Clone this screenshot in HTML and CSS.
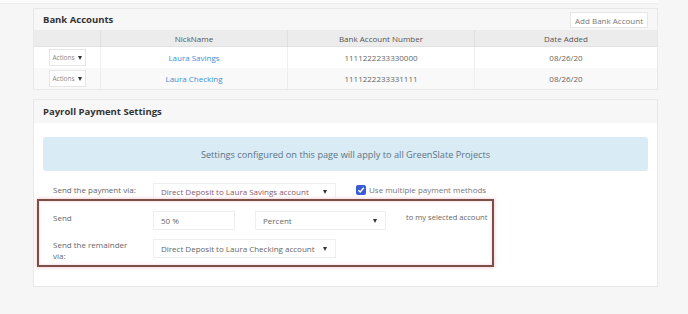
FILE: index.html
```html
<!DOCTYPE html>
<html lang="en">
<head>
    <meta charset="UTF-8">
    <meta name="viewport" content="width=device-width, initial-scale=1.0">
    <title>Payroll Payment Settings</title>
    <link rel="stylesheet" href="styles.css">
</head>
<body>
    <div class="top-strip"></div>
    <div class="page">
        <div class="panel">
            <div class="panel-head">
                <span class="panel-title">Bank Accounts</span>
                <button class="add-btn">Add Bank Account</button>
            </div>
            <table class="accounts">
                <thead>
                    <tr>
                        <th class="col-actions"></th>
                        <th class="col-mid">NickName</th>
                        <th class="col-mid">Bank Account Number</th>
                        <th>Date Added</th>
                    </tr>
                </thead>
                <tbody>
                    <tr>
                        <td><span class="actions">Actions <span class="caret"></span></span></td>
                        <td><a href="#" class="nick">Laura Savings</a></td>
                        <td>1111222233330000</td>
                        <td>08/26/20</td>
                    </tr>
                    <tr class="alt">
                        <td><span class="actions">Actions <span class="caret"></span></span></td>
                        <td><a href="#" class="nick">Laura Checking</a></td>
                        <td>1111222233331111</td>
                        <td>08/26/20</td>
                    </tr>
                </tbody>
            </table>
        </div>

        <div class="panel payroll">
            <div class="panel-head">
                <span class="panel-title">Payroll Payment Settings</span>
            </div>
            <div class="panel-body">
                <div class="alert">Settings configured on this page will apply to all GreenSlate Projects</div>

                <div class="form-row first">
                    <label class="form-label">Send the payment via:</label>
                    <div class="select wide pink">Direct Deposit to Laura Savings account <span class="caret"></span></div>
                    <label class="check">
                        <span class="box">
                            <svg width="8" height="8" viewBox="0 0 8 8"><path d="M1.3 4.2 L3.2 6 L6.8 1.8" fill="none" stroke="#fff" stroke-width="1.4"/></svg>
                        </span>
                        Use multiple payment methods
                    </label>
                </div>

                <div class="highlight">
                    <div class="form-row">
                        <label class="form-label">Send</label>
                        <div class="input">50 %</div>
                        <div class="select medium">Percent <span class="caret"></span></div>
                        <span class="after">to my selected account</span>
                    </div>
                    <div class="form-row second">
                        <label class="form-label wrap">Send the remainder via:</label>
                        <div class="select wide">Direct Deposit to Laura Checking account <span class="caret"></span></div>
                    </div>
                </div>
            </div>
        </div>
    </div>
</body>
</html>
```

FILE: styles.css
```css
body {
    margin: 0;
    background-color: #f6f6f6;
    font-family: "Open Sans", "Noto Sans", sans-serif;
    color: #666;
    font-size: 8px;
}

.top-strip {
    height: 3px;
    background-color: #fbfbfb;
    border-bottom: 1px solid #ececec;
    margin-right: 30px;
}

.page {
    padding: 4px 30px 0 33px;
}

.panel {
    background-color: #fff;
    border: 1px solid #e8e8e8;
}

.panel-head {
    height: 21px;
    background-color: #f7f7f7;
    display: flex;
    align-items: center;
    justify-content: space-between;
    padding: 0 9px;
}

.panel-title {
    font-weight: 700;
    font-size: 9.5px;
    color: #333;
}

.add-btn {
    font-family: inherit;
    font-size: 8px;
    color: #777;
    background-color: #fff;
    border: 1px solid #e6e6e6;
    height: 16px;
    padding: 0 4px;
    margin-top: 1px;
}

.accounts {
    width: 100%;
    border-collapse: collapse;
    table-layout: fixed;
}

.accounts th {
    height: 16px;
    background-color: #ececec;
    font-weight: 400;
    color: #555;
    border-right: 1px solid #e0e0e0;
    border-bottom: 1px solid #e2e2e2;
    padding: 0;
}

.accounts th:last-child,
.accounts td:last-child {
    border-right: none;
}

.accounts td {
    height: 21px;
    text-align: center;
    color: #666;
    border-right: 1px solid #eee;
    padding: 0;
}

.accounts .col-actions {
    width: 66px;
}

.accounts .col-mid {
    width: 186px;
}

.accounts tr.alt td {
    background-color: #f9f9f9;
}

.actions {
    display: inline-flex;
    align-items: center;
    justify-content: center;
    gap: 3px;
    width: 35px;
    height: 15px;
    border: 1px solid #e6e6e6;
    background-color: #fff;
    font-size: 6.5px;
    color: #888;
    vertical-align: middle;
}

.caret {
    display: inline-block;
    width: 0;
    height: 0;
    border-left: 2.5px solid transparent;
    border-right: 2.5px solid transparent;
    border-top: 4px solid #333;
}

.nick {
    color: #3d8fd8;
    text-decoration: none;
}

.payroll {
    margin-top: 9px;
    height: 186px;
}

.payroll .panel-head {
    height: 23px;
}

.panel-body {
    padding: 14px 9px 0;
}

.alert {
    height: 34px;
    background-color: #d9ebf5;
    border-radius: 3px;
    display: flex;
    align-items: center;
    justify-content: center;
    font-size: 9.2px;
    color: #5d7384;
}

.form-row {
    display: flex;
    align-items: flex-start;
    gap: 20px;
}

.form-row.first {
    margin-top: 12px;
    padding-left: 10px;
    height: 17px;
    align-items: center;
}

.form-label {
    width: 80px;
    flex: none;
    line-height: 11px;
    margin-top: 1px;
    white-space: nowrap;
}

.form-label.wrap {
    white-space: normal;
    width: 76px;
    margin-right: 4px;
    margin-top: 0;
}

.form-row.first .form-label {
    margin-top: -4px;
}

.select,
.input {
    box-sizing: border-box;
    height: 19px;
    border: 1px solid #eee;
    background-color: #fff;
    display: flex;
    align-items: center;
    justify-content: space-between;
    padding: 0 8px 0 7px;
    color: #666;
    flex: none;
}

.select.wide {
    width: 183px;
}

.select.medium {
    width: 131px;
}

.input {
    width: 82px;
}

.select.pink {
    color: #8c5868;
    height: 18px;
}

.check {
    display: flex;
    align-items: center;
    gap: 3px;
    color: #777;
    margin-top: -4px;
    white-space: nowrap;
}

.box {
    width: 10px;
    height: 10px;
    border-radius: 2px;
    background-color: #3b5bd6;
    display: flex;
    align-items: center;
    justify-content: center;
}

.highlight {
    margin-left: -6px;
    width: 457px;
    box-sizing: border-box;
    height: 68px;
    border: 2px solid #7c4f47;
    box-shadow: 0 0 3px 1px #f8d6dc, inset 0 0 2px 1px #fbe4e8;
    padding: 10px 14px 0;
    position: relative;
    z-index: 1;
    background-color: #fff;
    margin-top: -1px;
}

.form-row.second {
    margin-top: 9px;
}

.after {
    margin-top: 1px;
    white-space: nowrap;
    font-size: 7.6px;
}
```
